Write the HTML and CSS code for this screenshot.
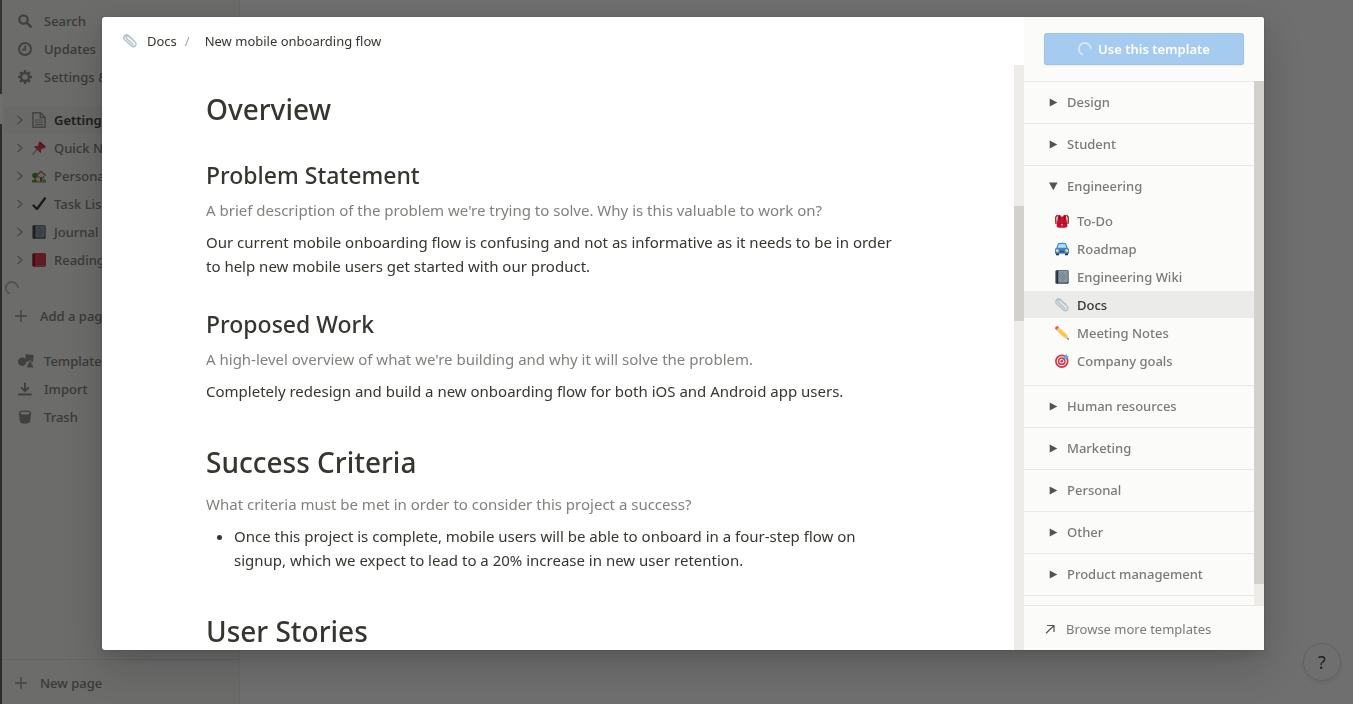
FILE: index.html
```html
<!DOCTYPE html>
<html lang="en">
<head>
<meta charset="utf-8">
<title>New mobile onboarding flow</title>
<link rel="stylesheet" href="styles.css">
</head>
<body>
<svg class="sprite" aria-hidden="true">
  <symbol id="clip" viewBox="0 0 14 14"><g fill="none" stroke-linecap="round" stroke-linejoin="round"><path d="M10.200 10.800 3.600 4.600C2.200 3 4.200 1 5.900 2.500L12 8C14.400 10.300 11.600 14.300 8.800 12.200L1.900 6C-.8 3.300 2.400-.6 5.600 1.700L10.900 6.500" stroke="#b4c2cd" stroke-width="1.500"/><path d="M4 3.600 9.600 9" stroke="#d5dee5" stroke-width=".8"/></g></symbol>
  <symbol id="book" viewBox="0 0 14 14"><rect x=".4" y=".3" width="13.300" height="13.400" rx="1.200" fill="#38444d"/><rect x="3.300" y="1" width="8.700" height="11.500" fill="#8b9fab"/><path d="M4 2.500l7 8M4 5.500l5.500 6.500M6 1.500l5.500 6.500M11.500 2.500l-7 8M11.500 5.500L6 12M9 1.500L4 7" stroke="#566b78" stroke-width=".5"/><path d="M2.600 .5v13" stroke="#20292f"/><path d="M12.800 1v11" stroke="#a7b7c0" stroke-width=".8"/></symbol>
  <symbol id="arrow-right" viewBox="0 0 10 10"><path d="M1.700 1.500 9.300 5.500 1.700 9.500Z" fill="#55534e"/></symbol>
  <symbol id="arrow-down" viewBox="0 0 10 10"><path d="M1 1.500H9.600L5.300 9.200Z" fill="#55534e"/></symbol>
  <symbol id="chevron" viewBox="0 0 8 10"><path d="M1.500 1 6 5 1.500 9" fill="none" stroke="#a09f9a" stroke-width="1.500"/></symbol>
  <symbol id="plus" viewBox="0 0 14 14"><path d="M7 1v12M1 7h12" stroke="#92918d" stroke-width="1.400"/></symbol>
  <symbol id="spinner" viewBox="0 0 14 14"><path d="M4.800 12.600A6 6 0 1 1 12.900 6.700" fill="none" stroke="currentColor" stroke-width="1.900"/></symbol>
</svg>

<div class="app">
  <div class="edge"></div>
  <nav class="sidebar">
    <div class="group">
      <button class="item"><svg class="icon" viewBox="0 0 14 14"><circle cx="5.500" cy="5.500" r="4.200" fill="none" stroke="#8a8985" stroke-width="2.200"/><path d="M8.700 8.700 12.700 12.700" stroke="#8a8985" stroke-width="2.600" stroke-linecap="round"/></svg>Search</button>
      <button class="item"><svg class="icon" viewBox="0 0 14 14"><circle cx="7" cy="7" r="6" fill="none" stroke="#8a8985" stroke-width="1.900"/><path d="M7.300 3.500V7.700H4" fill="none" stroke="#8a8985" stroke-width="1.700"/></svg>Updates</button>
      <button class="item"><svg class="icon" viewBox="0 0 14 14"><circle cx="7" cy="7" r="4" fill="none" stroke="#8a8985" stroke-width="2.400"/><path d="M7 0v2.500M7 11.500V14M0 7h2.500M11.500 7H14M2.100 2.100l1.700 1.700M10.200 10.200l1.700 1.700M2.100 11.900l1.700-1.700M10.200 3.800l1.700-1.700" stroke="#8a8985" stroke-width="2.400"/></svg>Settings &amp; Members</button>
    </div>
    <div class="group">
      <button class="page current"><svg class="chevron"><use href="#chevron"/></svg><svg class="page-icon" viewBox="0 0 14 16"><path d="M1 .8H8.500L13 5.300V15.200H1ZM8.300 1V5.600H13" fill="none" stroke="#92918d" stroke-width="1.500"/><path d="M3 8h8M3 10.300h8M3 12.600h8" stroke="#92918d" stroke-width="1.100"/></svg>Getting Started</button>
      <button class="page"><svg class="chevron"><use href="#chevron"/></svg><svg class="page-icon" viewBox="0 0 14 14"><path d="M6 7.500 .6 13.500" stroke="#99aab5" stroke-width="1.400"/><path d="M7.500.8C6 2.400 6.500 3 6.500 4L4.800 5.200C3.500 4.800 2.500 5.300 2 5.800L8.500 12C9.300 11 9.300 10 8.900 9.200L10 7.600C11.500 7.800 12.500 7.400 13.400 6.300Z" fill="#dd2e44"/><path d="M7.500.8 13.400 6.300" stroke="#a01630" stroke-width="1.200"/></svg>Quick Note</button>
      <button class="page"><svg class="chevron"><use href="#chevron"/></svg><svg class="page-icon" viewBox="0 0 14 14"><path d="M0 13.500V11H14V13.500Z" fill="#5c913b"/><path d="M5 6 9 2.500 13 6V12.500H5Z" fill="#ffe8b6"/><path d="M4 7 9 2.300 13.800 6.800" fill="none" stroke="#77726c" stroke-width="1.300"/><rect x="8" y="8" width="2.500" height="4.500" fill="#a0522d"/><path d="M6 7h1.500v2H6ZM11 7h1.300v2H11Z" fill="#55acee"/><circle cx="3" cy="6.500" r="2.800" fill="#3e8a35"/><path d="M3 7v6" stroke="#8a5638" stroke-width="1.300"/><circle cx="12" cy="11.500" r="1.500" fill="#77b255"/></svg>Personal Home</button>
      <button class="page"><svg class="chevron"><use href="#chevron"/></svg><svg class="page-icon" viewBox="0 0 14 14"><path d="M1.500 8.500 5 12 13 1.300" fill="none" stroke="#25292c" stroke-width="2.300" stroke-linecap="round" stroke-linejoin="round"/></svg>Task List</button>
      <button class="page"><svg class="chevron"><use href="#chevron"/></svg><svg class="page-icon"><use href="#book"/></svg>Journal</button>
      <button class="page"><svg class="chevron"><use href="#chevron"/></svg><svg class="page-icon" viewBox="0 0 14 14"><rect x=".3" y=".3" width="13.400" height="13.400" rx="1.400" fill="#a0041e"/><rect x="3" y=".3" width="10.700" height="11.500" rx="1" fill="#dd2e44"/><path d="M3 12.500H13" stroke="#d9a5ac" stroke-width=".7"/></svg>Reading List</button>
      <div class="loading"><svg><use href="#spinner"/></svg></div>
      <button class="item add"><svg class="icon"><use href="#plus"/></svg>Add a page</button>
    </div>
    <div class="group tools">
      <button class="item"><svg class="icon wide" viewBox="0 0 16 14"><circle cx="4.200" cy="7.800" r="4.200" fill="#8a8985"/><path d="M7.700.2 15.700 1 15 8 7.200 7.400Z" fill="#8a8985"/><path d="M12 5.800 16 13.800H8Z" fill="#8a8985" stroke="#f7f7f5" stroke-width=".7"/></svg>Templates</button>
      <button class="item"><svg class="icon" viewBox="0 0 14 14"><path d="M7 .5V9M3.200 5.400 7 9.200 10.800 5.400M.3 12.500H13.700" fill="none" stroke="#8a8985" stroke-width="1.900"/></svg>Import</button>
      <button class="item"><svg class="icon" viewBox="0 0 14 14"><path d="M.8 3C.8-.2 13.200-.2 13.200 3L12 12C11.800 14.300 2.200 14.300 2 12Z" fill="#8a8985"/><ellipse cx="7" cy="3.200" rx="4.700" ry="1.400" fill="#f7f7f5"/></svg>Trash</button>
    </div>
    <button class="item new-page"><svg class="icon"><use href="#plus"/></svg>New page</button>
  </nav>
  <button class="help" aria-label="Help">?</button>
</div>

<div class="overlay">
  <div class="modal" role="dialog" aria-label="Template preview">
    <section class="preview">
      <header class="crumbs">
        <svg class="emoji"><use href="#clip"/></svg><a href="#docs">Docs</a><span class="slash">/</span><a href="#flow">New mobile onboarding flow</a>
      </header>
      <div class="scroller">
        <article class="doc">
          <h1>Overview</h1>
          <h2>Problem Statement</h2>
          <p class="hint">A brief description of the problem we're trying to solve. Why is this valuable to work on?</p>
          <p>Our current mobile onboarding flow is confusing and not as informative as it needs to be in order to help new mobile users get started with our product.</p>
          <h2>Proposed Work</h2>
          <p class="hint">A high-level overview of what we're building and why it will solve the problem.</p>
          <p>Completely redesign and build a new onboarding flow for both iOS and Android app users.</p>
          <h1>Success Criteria</h1>
          <p class="hint">What criteria must be met in order to consider this project a success?</p>
          <ul><li>Once this project is complete, mobile users will be able to onboard in a four-step flow on signup, which we expect to lead to a 20% increase in new user retention.</li></ul>
          <h1>User Stories</h1>
        </article>
        <div class="track doc-track"><div class="thumb"></div></div>
      </div>
    </section>
    <aside class="picker">
      <div class="action"><button class="use"><svg><use href="#spinner"/></svg>Use this template</button></div>
      <div class="scroller">
        <div class="list">
          <button class="category"><svg><use href="#arrow-right"/></svg>Design</button>
          <button class="category"><svg><use href="#arrow-right"/></svg>Student</button>
          <div class="open-category">
            <button class="category open"><svg><use href="#arrow-down"/></svg>Engineering</button>
            <button class="template"><svg class="emoji" viewBox="0 0 14 14"><path d="M2.500 1 .6 3.500 1 10M11.500 1 13.400 3.500 13 10" fill="none" stroke="#923b24" stroke-width="1.500"/><path d="M3 1.500Q5-.3 6 2.500H8Q9-.3 11 1.500L12.500 12Q12 13.700 10 13.700H4Q2 13.700 1.500 12Z" fill="#c41230"/><path d="M4.300 1.500 4.700 6M9.700 1.500 9.300 6" stroke="#8a0820"/><path d="M4 9.500h6" stroke="#a0041e" stroke-width=".8"/><path d="M7 9.700v1.800" stroke="#f4c9ce" stroke-width="1.200"/></svg>To-Do</button>
            <button class="template"><svg class="emoji" viewBox="0 0 14 14"><path d="M1 10h3v3.200H1ZM10 10h3v3.200h-3Z" fill="#292f33"/><path d="M3 1.300Q7 .1 11 1.300L12.500 5.500 14 7V11.700H0V7L1.500 5.500Z" fill="#3f86c7"/><path d="M3.800 2.300Q7 1.500 10.200 2.300L11.400 5.700H2.600Z" fill="#b5dcf7"/><rect x="4.700" y="8.500" width="4.600" height="2" fill="#235b91"/><circle cx="2.300" cy="8.700" r="1.400" fill="#ffe07a"/><circle cx="11.700" cy="8.700" r="1.400" fill="#ffe07a"/></svg>Roadmap</button>
            <button class="template"><svg class="emoji"><use href="#book"/></svg>Engineering Wiki</button>
            <button class="template selected"><svg class="emoji"><use href="#clip"/></svg>Docs</button>
            <button class="template"><svg class="emoji" viewBox="0 0 14 14"><path d="M4 1.300 12.200 8.700 9.300 11.900 1.300 4.300Z" fill="#ffcc4d"/><path d="M2.500 3 10.500 10.500" stroke="#f3aa35" stroke-width=".7"/><path d="M2.500.1Q0 .2.100 2.700L1.300 4.300 4 1.300Z" fill="#ea596e"/><path d="M2.400 5.200 4.900 2.400" stroke="#ccd6dd" stroke-width="1.200"/><path d="M12.200 8.700 13.900 13.800 9.300 11.900Z" fill="#efc59a"/><path d="M13.200 12 13.900 13.800 12.200 13.100Z" fill="#292f33"/></svg>Meeting Notes</button>
            <button class="template"><svg class="emoji" viewBox="0 0 14 14"><circle cx="6.800" cy="7.200" r="6.700" fill="#dd2e44"/><circle cx="6.800" cy="7.200" r="5" fill="#fff"/><circle cx="6.800" cy="7.200" r="3.900" fill="#dd2e44"/><circle cx="6.800" cy="7.200" r="2.400" fill="#fff"/><circle cx="6.800" cy="7.200" r="1.300" fill="#dd2e44"/><path d="M6.800 7.200 11 3" stroke="#3b88c3" stroke-width="1.200"/><path d="M9.200 4.800 9.400 2 11.700 0 12 2 14 2.300 12 4.600Z" fill="#55acee"/></svg>Company goals</button>
          </div>
          <button class="category"><svg><use href="#arrow-right"/></svg>Human resources</button>
          <button class="category"><svg><use href="#arrow-right"/></svg>Marketing</button>
          <button class="category"><svg><use href="#arrow-right"/></svg>Personal</button>
          <button class="category"><svg><use href="#arrow-right"/></svg>Other</button>
          <button class="category"><svg><use href="#arrow-right"/></svg>Product management</button>
        </div>
        <div class="track list-track"><div class="thumb"></div></div>
      </div>
      <a class="browse" href="#templates"><svg viewBox="0 0 10 10"><path d="M2 1.500H9V8M9 1.500 1 9.300" fill="none" stroke="#55534e" stroke-width="1.200"/></svg>Browse more templates</a>
    </aside>
  </div>
</div>
</body>
</html>
```
FILE: styles.css
```css
* { box-sizing: border-box; }
html, body { height: 100%; }
body {
  margin: 0;
  overflow: hidden;
  font-family: "Segoe UI", "Noto Sans", "Open Sans", sans-serif;
  font-size: 13px;
  color: #37352f;
  background: #fff;
}
button { border: 0; background: none; padding: 0; font: inherit; color: inherit; text-align: left; cursor: pointer; }
a { color: inherit; text-decoration: none; }
svg { flex: none; display: block; }
.sprite { position: absolute; width: 0; height: 0; }

.app { display: flex; height: 100%; }
.edge { width: 2px; background: linear-gradient(#6a6a6a 94px, #fff 94px 124px, #555 124px); }
.sidebar {
  width: 238px;
  padding-top: 7px;
  display: flex;
  flex-direction: column;
  gap: 15px;
  background: #f7f7f5;
  border-right: 1px solid #efeeeb;
  font-weight: 500;
  color: #7b7a75;
  white-space: nowrap;
}
.group { display: flex; flex-direction: column; }
.tools { padding-top: 2px; }
.item, .page { display: flex; align-items: center; height: 28px; }
.item { padding-left: 16px; gap: 12px; }
.icon { width: 14px; height: 14px; }
.icon.wide { width: 16px; margin-right: -2px; }
.page { padding-left: 14px; }
.current { background: #efefec; margin-left: 2px; padding-left: 12px; border-radius: 3px; color: #37352f; font-weight: 600; }
.chevron { width: 8px; height: 10px; margin-right: 8px; }
.page-icon { width: 14px; height: 14px; margin-right: 8px; }
.current .page-icon { height: 16px; }
.loading { height: 28px; padding: 7px 3px; color: #b5b4b0; }
.loading svg { width: 14px; height: 14px; }
.add, .new-page { padding-left: 12px; }
.new-page { margin-top: auto; height: 45px; padding-top: 2px; border-top: 1px solid #e6e5e2; }
.help {
  position: fixed;
  right: 12px;
  bottom: 23px;
  width: 38px;
  height: 38px;
  border-radius: 50%;
  border: 1px solid #dcdcdc;
  box-shadow: 0 2px 4px rgba(15, 15, 15, .1);
  text-align: center;
  font-size: 18px;
}

.overlay {
  position: fixed;
  inset: 0;
  padding: 17px 89px 54px 102px;
  display: flex;
  background: rgba(15, 15, 15, .6);
}
.modal {
  flex: 1;
  min-width: 0;
  display: flex;
  overflow: hidden;
  border-radius: 3px 3px 0 3px;
  background: #fff;
  box-shadow: 0 0 0 1px rgba(15, 15, 15, .05), 0 5px 10px rgba(15, 15, 15, .1), 0 15px 40px rgba(15, 15, 15, .2);
}
.preview { flex: 1; min-width: 0; display: flex; flex-direction: column; }
.crumbs { display: flex; align-items: center; height: 48px; padding-left: 21px; flex: none; }
.emoji { width: 14px; height: 14px; margin-right: 8px; }
.crumbs .emoji { margin-right: 10px; }
.slash { margin: 0 15px 0 8px; color: #a5a49f; }
.scroller { flex: 1; min-height: 0; display: flex; overflow: hidden; }
.doc { flex: 1; min-width: 0; padding: 25px 104px 0; font-size: 15px; line-height: 24px; }
h1, h2, .doc p, ul { margin: 0; }
h1, h2 { font-weight: 500; }
h1 { font-size: 28px; line-height: 39px; margin-top: 40px; margin-bottom: 10px; }
h1:first-child { margin-top: 0; }
h2 { font-size: 23px; line-height: 31px; margin-top: 31px; margin-bottom: 7px; }
.doc p { margin-bottom: 8px; }
.doc .hint { color: #82817d; }
.doc ul { padding-left: 28px; }
.track { width: 10px; flex: none; background: #edece9; }
.thumb { background: #d3d1cb; }
.doc-track { padding-top: 141px; }
.doc-track .thumb { height: 115px; }
.list-track .thumb { height: 96%; }

.picker { width: 240px; flex: none; display: flex; flex-direction: column; background: #fbfbfa; }
.action { padding: 16px 20px; }
.use {
  display: flex;
  align-items: center;
  justify-content: center;
  gap: 6px;
  width: 100%;
  height: 32px;
  border-radius: 3px;
  background: #a6cbf1;
  box-shadow: inset 0 0 0 1px rgba(15, 15, 15, .04), 0 1px 2px rgba(15, 15, 15, .08);
  color: #fff;
  font-weight: 600;
}
.use svg { width: 14px; height: 14px; color: #d5e6f7; }
.list { flex: 1; border-top: 1px solid #e8e8e6; color: #7b7a75; font-weight: 500; }
.category { display: flex; align-items: center; gap: 9px; width: 100%; height: 42px; padding-left: 24px; padding-bottom: 1px; border-bottom: 1px solid #e8e8e6; }
.category svg { width: 10px; height: 10px; }
.open-category { padding-bottom: 10px; border-bottom: 1px solid #e8e8e6; }
.open { height: 41px; border-bottom: 0; }
.template { display: flex; align-items: center; width: 100%; height: 27px; margin-bottom: 1px; padding-left: 31px; }
.selected { background: #ebebe9; color: #37352f; }
.browse { display: flex; align-items: center; gap: 11px; height: 45px; padding-left: 21px; padding-top: 1px; border-top: 1px solid #e8e8e6; color: #7b7a75; }
.browse svg { width: 10px; height: 10px; }
```
